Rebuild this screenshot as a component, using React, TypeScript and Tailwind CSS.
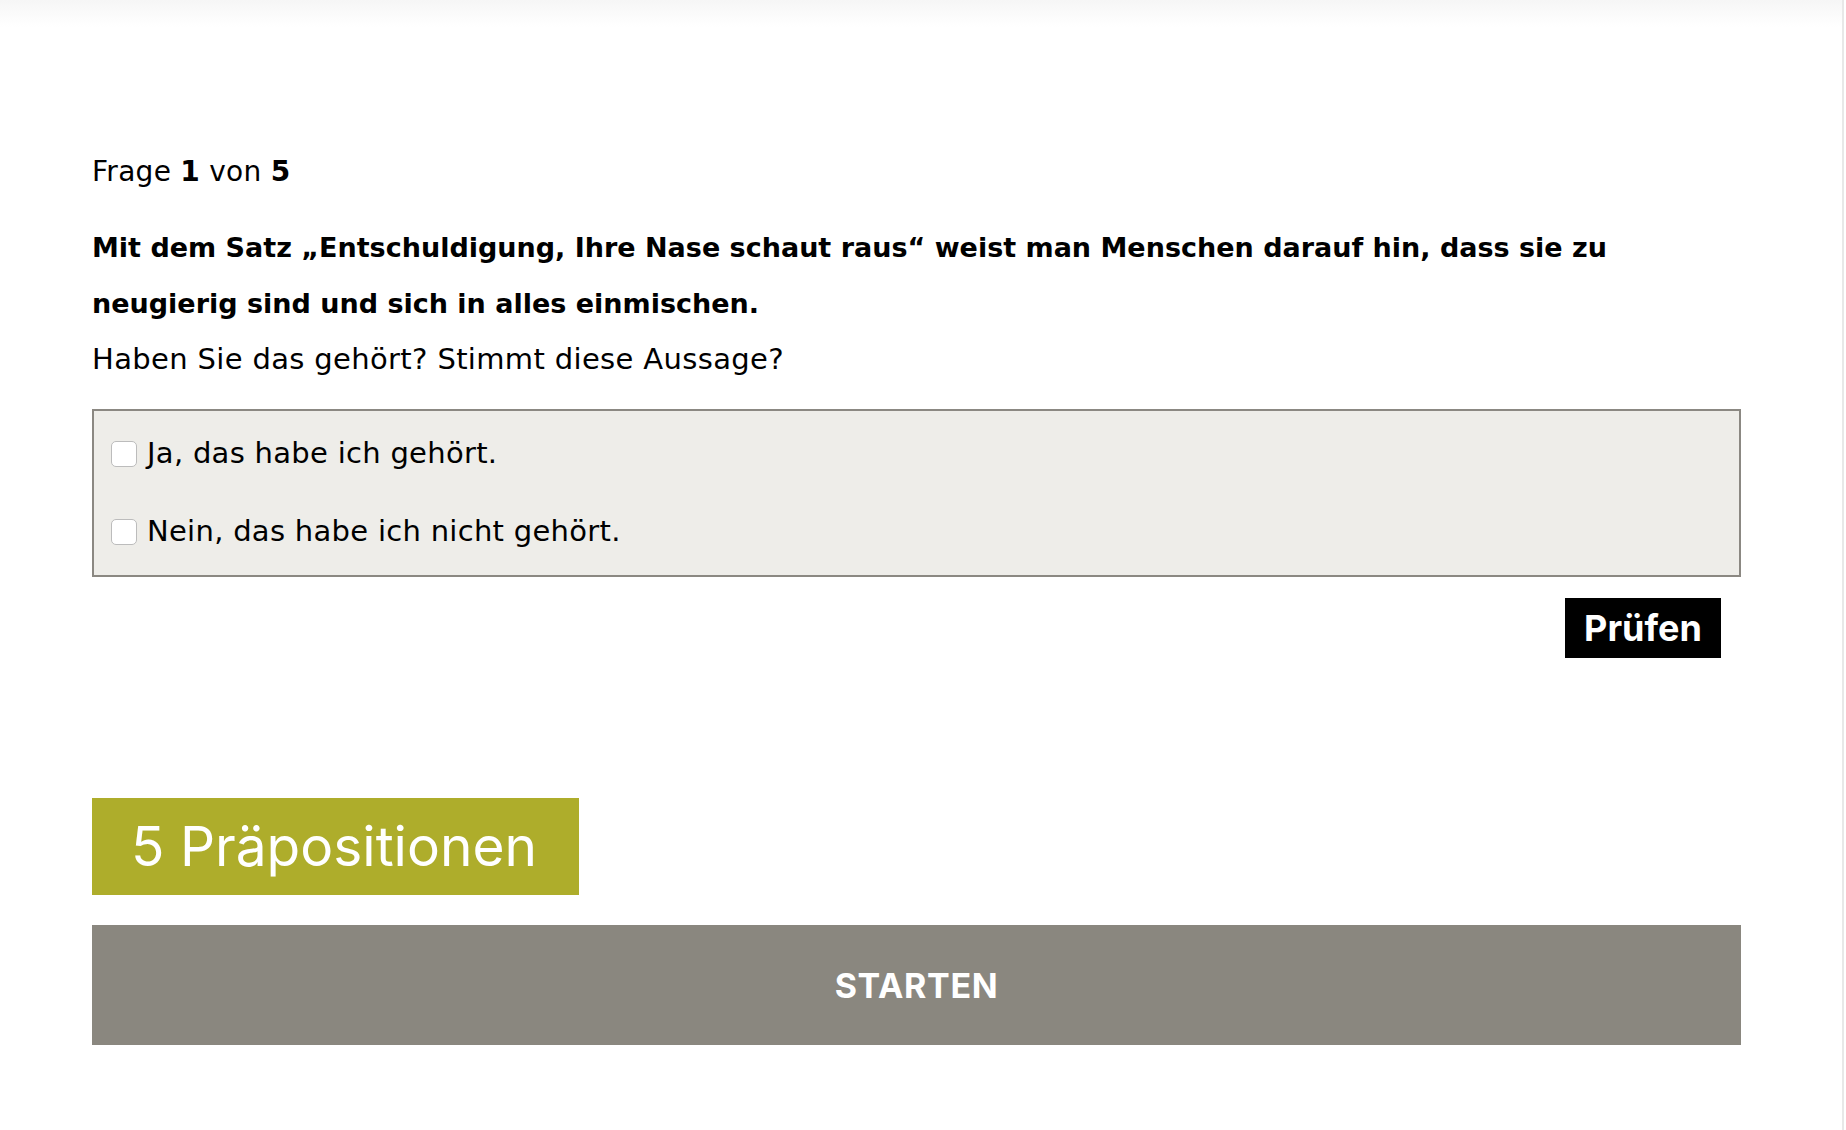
import { memo } from "react";

const options = ["Ja, das habe ich gehört.", "Nein, das habe ich nicht gehört."];

function QuizPageComponent() {
  return (
    <div className="flex min-h-screen w-full bg-white font-['DejaVu_Sans',sans-serif] text-black">
      <div className="flex-1">
        {/* Schatten unter dem Header */}
        <div className="h-[27px] bg-gradient-to-b from-[#f6f6f6] to-white" />

        <div className="ml-[92px] w-[1649px] pt-[125px] pb-[60px]">
          {/* Frage */}
          <p className="text-[28px] leading-[40px] tracking-[0.01em]">
            Frage <b className="font-bold">1</b> von <b className="font-bold">5</b>
          </p>

          <p className="mt-[28px] text-[27px] font-bold leading-[56px]">
            Mit dem Satz „Entschuldigung, Ihre Nase schaut raus“ weist man Menschen darauf hin, dass sie zu
            neugierig sind und sich in alles einmischen.
          </p>
          <p className="text-[29px] leading-[55px] tracking-[0.012em]">
            Haben Sie das gehört? Stimmt diese Aussage?
          </p>

          {/* Antworten */}
          <div className="mt-[22px] flex flex-col gap-[38px] border-2 border-[#8b8882] bg-[#eeede9] py-[23px] pl-[17px]">
            {options.map((o) => (
              <label key={o} className="flex h-[40px] items-center gap-[10px] text-[29px] tracking-[0.01em]">
                <input
                  type="checkbox"
                  className="h-[26px] w-[26px] appearance-none rounded-[5px] border border-[#bcbcbc] bg-white"
                />
                <span>{o}</span>
              </label>
            ))}
          </div>

          <div className="mt-[21px] flex justify-end pr-[20px]">
            <button className="flex h-[60px] w-[156px] items-center justify-center bg-black font-['Inter',sans-serif] text-[36px] font-bold text-white">
              Prüfen
            </button>
          </div>

          {/* Kapitel */}
          <div className="mt-[140px] flex h-[97px] w-[487px] items-center bg-[#aead2b] pl-[39px]">
            <h2 className="font-['Inter',sans-serif] text-[55px] font-normal text-white">5 Präpositionen</h2>
          </div>

          <button className="mt-[30px] flex h-[120px] w-full items-center justify-center bg-[#8a877f] font-['Inter',sans-serif] text-[34px] font-bold tracking-[0.02em] text-white">
            STARTEN
          </button>
        </div>
      </div>

      {/* Scrollbalken-Kante */}
      <div className="w-[2px] bg-[#e8e8e8]" />
      <div className="w-[2px] bg-white" />
    </div>
  );
}

export default memo(QuizPageComponent);
